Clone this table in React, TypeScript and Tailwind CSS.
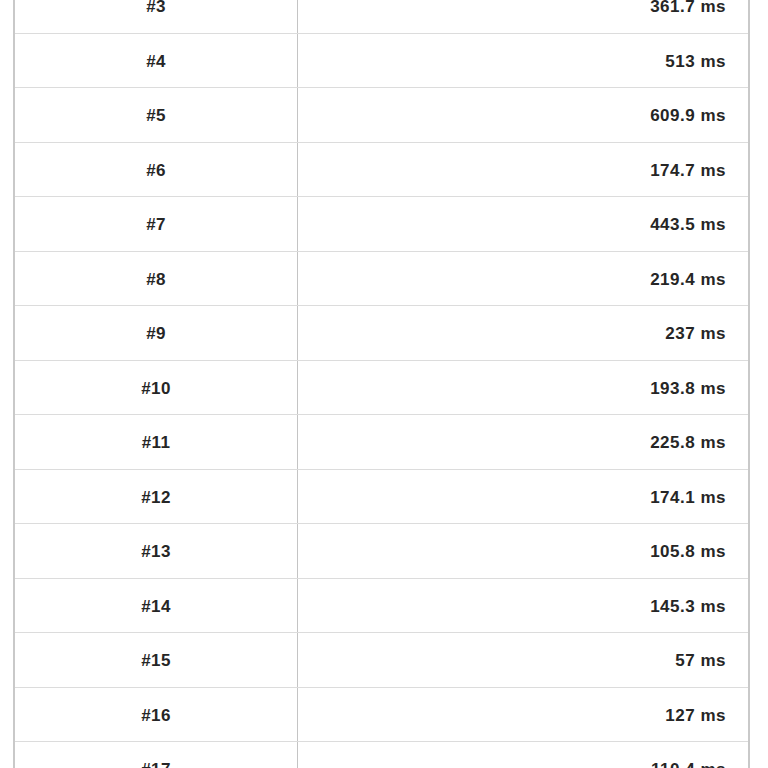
const rows: [string, string][] = [
  ["#3", "361.7 ms"],
  ["#4", "513 ms"],
  ["#5", "609.9 ms"],
  ["#6", "174.7 ms"],
  ["#7", "443.5 ms"],
  ["#8", "219.4 ms"],
  ["#9", "237 ms"],
  ["#10", "193.8 ms"],
  ["#11", "225.8 ms"],
  ["#12", "174.1 ms"],
  ["#13", "105.8 ms"],
  ["#14", "145.3 ms"],
  ["#15", "57 ms"],
  ["#16", "127 ms"],
  ["#17", "110.4 ms"],
]

export default function App() {
  return (
    <div className="h-[768px] w-[768px] overflow-hidden bg-white font-['Liberation_Sans',Arial,sans-serif]">
      <div className="-mt-[21px] ml-[13px] w-[737px] border-x-2 border-[#c9c9c9]">
        {rows.map(([id, time]) => (
          <div key={id} className="grid h-[54.5px] grid-cols-[282px_1fr] border-b border-[#dcdcdc]">
            <div className="flex items-center justify-center pt-[2px] text-[17px] font-bold tracking-[0.4px] text-[#262626]">
              {id}
            </div>
            <div className="flex items-center justify-end border-l border-[#c4c4c4] pt-[2px] pr-[22px] text-[17px] font-bold tracking-[0.5px] text-[#262626]">
              {time}
            </div>
          </div>
        ))}
      </div>
    </div>
  )
}
